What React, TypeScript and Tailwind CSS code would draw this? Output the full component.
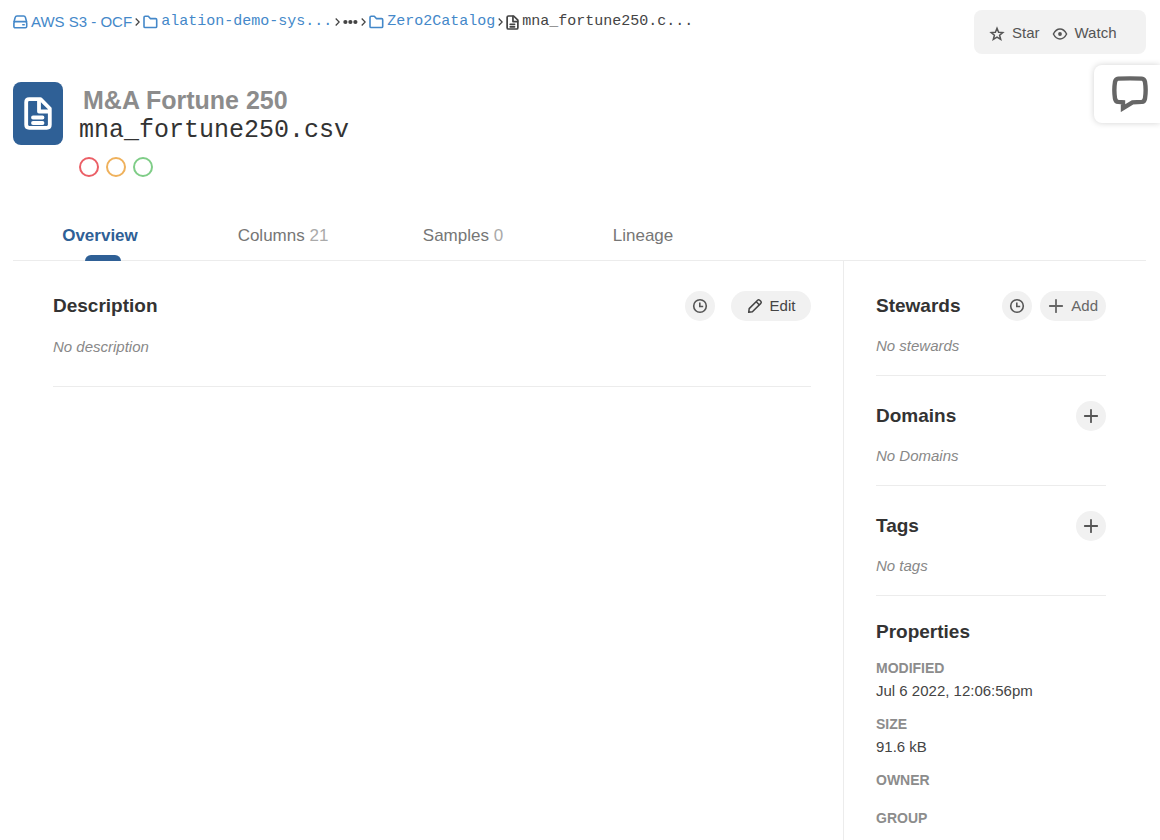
import type { ReactNode } from "react";

interface IconProps {
  className?: string;
}

function DriveIcon() {
  return (
    <svg viewBox="0 0 15 14" className="h-[14px] w-[15px] shrink-0" fill="none" stroke="currentColor" strokeWidth="1.6" strokeLinejoin="round">
      <path d="M0.9 7.2 2.2 2.4Q2.6 1 4 1H10.6Q12 1 12.4 2.4L13.7 7.2" />
      <rect x="0.9" y="6.6" width="12.8" height="6.2" rx="1.3" />
      <path d="M9.8 9.8h1.4" strokeLinecap="round" />
    </svg>
  );
}

function FolderIcon() {
  return (
    <svg viewBox="0 0 15 14" className="h-[14px] w-[15px] shrink-0" fill="none" stroke="currentColor" strokeWidth="1.6" strokeLinejoin="round">
      <path d="M1 2.4Q1 1.3 2.1 1.3H5.3L7.3 3.6H12.6Q13.7 3.6 13.7 4.7V11.4Q13.7 12.5 12.6 12.5H2.1Q1 12.5 1 11.4Z" />
    </svg>
  );
}

function FileIcon({ className }: IconProps) {
  return (
    <svg viewBox="0 0 28 33" className={className} fill="none" stroke="currentColor" strokeWidth="3.8" strokeLinejoin="round" strokeLinecap="round">
      <path d="M2.2 5.2Q2.2 2.2 5.2 2.2H16.5L25.8 11.5V27.8Q25.8 30.8 22.8 30.8H5.2Q2.2 30.8 2.2 27.8Z" />
      <path d="M15 3V14.5H25" />
      <path d="M9 20.5H18.5M9 26H18.5" />
    </svg>
  );
}

function ChevronIcon() {
  return (
    <svg viewBox="0 0 5 10" className="h-[10px] w-[5px] shrink-0 text-[#444]" fill="none" stroke="currentColor" strokeWidth="1.3">
      <path d="M0.7 1.5 4.2 5 0.7 8.5" />
    </svg>
  );
}

function DotsIcon() {
  return (
    <svg viewBox="0 0 15 6" className="h-[6px] w-[15px]" fill="currentColor">
      <circle cx="2.4" cy="3" r="2.1" />
      <circle cx="7.4" cy="3" r="2.1" />
      <circle cx="12.4" cy="3" r="2.1" />
    </svg>
  );
}

function StarIcon() {
  return (
    <svg viewBox="0 0 16 16" className="size-4" fill="none" stroke="currentColor" strokeWidth="1.5">
      <path d="M8 2.2 9.6 6.2 13.8 6.5 10.6 9.2 11.7 13.5 8 11.2 4.3 13.5 5.4 9.2 2.2 6.5 6.4 6.2Z" />
    </svg>
  );
}

function EyeIcon() {
  return (
    <svg viewBox="0 0 16 16" className="size-4" fill="none" stroke="currentColor" strokeWidth="1.5" strokeLinejoin="round">
      <path d="M1.4 8Q4 3 8 3T14.6 8Q12 13 8 13T1.4 8Z" />
      <circle cx="8" cy="8" r="1.9" fill="currentColor" stroke="none" />
    </svg>
  );
}

function ClockIcon() {
  return (
    <svg viewBox="0 0 16 16" className="size-4" fill="none" stroke="currentColor" strokeWidth="1.6">
      <circle cx="8" cy="8" r="6.3" />
      <path d="M7.8 4.4V8.5H11.2" />
    </svg>
  );
}

function PencilIcon() {
  return (
    <svg viewBox="0 0 16 16" className="size-4" fill="none" stroke="currentColor" strokeWidth="1.5" strokeLinejoin="round">
      <path d="M1.7 14.3 2.2 10.6 10.6 2.2Q11.6 1.2 12.7 2.2L13.8 3.3Q14.8 4.4 13.8 5.4L5.4 13.8Z" />
      <path d="M9.2 3.8 12.2 6.8" />
    </svg>
  );
}

function PlusIcon() {
  return (
    <svg viewBox="0 0 16 16" className="size-4" fill="none" stroke="currentColor" strokeWidth="1.8" strokeLinecap="round">
      <path d="M8 1.8V14.2M1.8 8H14.2" />
    </svg>
  );
}

function CommentIcon() {
  return (
    <svg viewBox="0 0 36 36" className="size-9" fill="none" stroke="currentColor" strokeWidth="4.4" strokeLinejoin="miter">
      <path d="M6.2 2.6Q18 2.2 29.8 2.6Q32.4 2.8 33 6Q34.3 14 33 22.5Q32.4 25.6 29.8 25.9L20.5 26.4L11 32.2V26.2L6.2 25.9Q3.6 25.6 3 22.5Q1.7 14 3 6Q3.6 2.8 6.2 2.6Z" />
    </svg>
  );
}

const tabs = [
  { label: "Overview", active: true },
  { label: "Columns", count: 21 },
  { label: "Samples", count: 0 },
  { label: "Lineage" },
];

const properties = [
  { name: "MODIFIED", value: "Jul 6 2022, 12:06:56pm" },
  { name: "SIZE", value: "91.6 kB" },
  { name: "OWNER", value: "" },
  { name: "GROUP", value: "" },
];

function Breadcrumbs() {
  return (
    <nav aria-label="Breadcrumb" className="flex h-6 min-w-0 items-center gap-[3px] text-[15px] whitespace-nowrap text-[#4488c9]">
      <a href="#source" className="flex items-center gap-[3px]">
        <DriveIcon />
        AWS S3 - OCF
      </a>
      <ChevronIcon />
      <a href="#bucket" className="flex items-center gap-[3px] font-['Liberation_Mono',monospace]">
        <FolderIcon />
        alation-demo-sys...
      </a>
      <ChevronIcon />
      <button type="button" aria-label="Show hidden folders" className="text-[#444]">
        <DotsIcon />
      </button>
      <ChevronIcon />
      <a href="#folder" className="flex items-center gap-[3px] font-['Liberation_Mono',monospace]">
        <FolderIcon />
        Zero2Catalog
      </a>
      <ChevronIcon />
      <span aria-current="page" className="flex items-center gap-[3px] font-['Liberation_Mono',monospace] text-[#444]">
        <FileIcon className="h-[15px] w-[13px] shrink-0" />
        mna_fortune250.c...
      </span>
    </nav>
  );
}

function RoundButton({ label, children }: { label: string; children: ReactNode }) {
  return (
    <button type="button" aria-label={label} className="flex size-[30px] items-center justify-center rounded-full bg-[#f1f1f1] text-[#555]">
      {children}
    </button>
  );
}

interface SideSectionProps {
  title: string;
  empty: string;
  actions: ReactNode;
}

function SideSection({ title, empty, actions }: SideSectionProps) {
  return (
    <section className="mb-6 border-b border-[#ececec] pb-[19px]">
      <div className="flex items-center justify-between">
        <h2 className="text-[19px] leading-8 font-bold text-[#333]">{title}</h2>
        <div className="flex gap-2">{actions}</div>
      </div>
      <p className="mt-[14px] text-[15px] leading-5 text-[#888] italic">{empty}</p>
    </section>
  );
}

export default function App() {
  return (
    <div className="relative flex min-h-screen flex-col bg-white pr-[14px] pl-[13px] font-['Liberation_Sans',Arial,sans-serif] text-[#444]">
      <div className="flex items-start justify-between pt-[10px]">
        <Breadcrumbs />
        <div className="flex h-11 w-[172px] items-center gap-3 rounded-lg bg-[#f2f2f2] pt-[3px] pl-[15px] text-[15px] text-[#555]">
          <button type="button" className="flex items-center gap-[7px]">
            <StarIcon />
            Star
          </button>
          <button type="button" className="flex items-center gap-[7px]">
            <EyeIcon />
            Watch
          </button>
        </div>
      </div>

      <button
        type="button"
        aria-label="Feedback"
        className="absolute top-[65px] right-0 flex h-[58px] w-[66px] items-center rounded-l-lg bg-white pl-[18px] text-[#666] shadow-[0_0_6px_rgba(0,0,0,0.18)]"
      >
        <CommentIcon />
      </button>

      <header className="mt-7 flex gap-4">
        <div className="flex h-[63px] w-[50px] shrink-0 items-center justify-center rounded-lg bg-[#2f6096] text-white">
          <FileIcon className="h-[33px] w-[28px]" />
        </div>
        <div className="pt-[3px]">
          <h1 className="pl-1 text-[25px] leading-[30px] font-bold text-[#8c8c8c]">M&amp;A Fortune 250</h1>
          <p className="font-['Liberation_Mono',monospace] text-[25px] leading-8 text-[#333]">mna_fortune250.csv</p>
          <div className="mt-[10px] flex gap-[7px]">
            <button type="button" aria-label="Deprecate" className="size-5 rounded-full border-2 border-[#eb5f66]" />
            <button type="button" aria-label="Warn" className="size-5 rounded-full border-2 border-[#efb15c]" />
            <button type="button" aria-label="Endorse" className="size-5 rounded-full border-2 border-[#7fcd87]" />
          </div>
        </div>
      </header>

      <div role="tablist" className="mt-8 flex border-b border-[#ececec]">
        {tabs.map((tab) => (
          <button
            key={tab.label}
            type="button"
            role="tab"
            aria-selected={Boolean(tab.active)}
            className={
              tab.active
                ? "relative h-[51px] w-[180px] pt-[2px] pr-[6px] text-[17px] font-bold text-[#2f6096]"
                : "h-[51px] w-[180px] pt-[2px] text-[17px] text-[#767676]"
            }
          >
            {tab.label}
            {tab.count !== undefined && <span className="text-[#aaa]"> {tab.count}</span>}
            {tab.active && <span className="absolute -bottom-px left-[72px] h-[6px] w-9 rounded-t-md bg-[#2f6096]" />}
          </button>
        ))}
      </div>

      <div className="flex grow">
        <main className="grow pt-[29px] pr-8 pl-10">
          <section className="border-b border-[#ececec] pb-[29px]">
            <div className="flex items-center justify-between">
              <h2 className="text-[19px] leading-8 font-bold text-[#333]">Description</h2>
              <div className="flex gap-4">
                <RoundButton label="Description history">
                  <ClockIcon />
                </RoundButton>
                <button type="button" className="flex h-[30px] w-20 items-center justify-center gap-[7px] rounded-full bg-[#f1f1f1] text-[15px] text-[#444]">
                  <PencilIcon />
                  Edit
                </button>
              </div>
            </div>
            <p className="mt-[15px] text-[15px] leading-5 text-[#888] italic">No description</p>
          </section>
        </main>

        <aside className="w-[303px] shrink-0 border-l border-[#ececec] pt-[29px] pr-10 pl-8">
          <SideSection
            title="Stewards"
            empty="No stewards"
            actions={
              <>
                <RoundButton label="Stewards history">
                  <ClockIcon />
                </RoundButton>
                <button type="button" className="flex h-[30px] items-center gap-[7px] rounded-full bg-[#f1f1f1] px-2 text-[15px] text-[#666]">
                  <PlusIcon />
                  Add
                </button>
              </>
            }
          />
          <SideSection
            title="Domains"
            empty="No Domains"
            actions={
              <RoundButton label="Add domain">
                <PlusIcon />
              </RoundButton>
            }
          />
          <SideSection
            title="Tags"
            empty="No tags"
            actions={
              <RoundButton label="Add tag">
                <PlusIcon />
              </RoundButton>
            }
          />
          <section>
            <h2 className="text-[19px] leading-6 font-bold text-[#333]">Properties</h2>
            <dl className="mt-[14px] flex flex-col gap-[14px]">
              {properties.map((item) => (
                <div key={item.name}>
                  <dt className="text-sm leading-5 font-bold text-[#8c8c8c]">{item.name}</dt>
                  <dd className="pt-1 text-[15px] leading-[18px] text-[#444]">{item.value}</dd>
                </div>
              ))}
            </dl>
          </section>
        </aside>
      </div>
    </div>
  );
}
